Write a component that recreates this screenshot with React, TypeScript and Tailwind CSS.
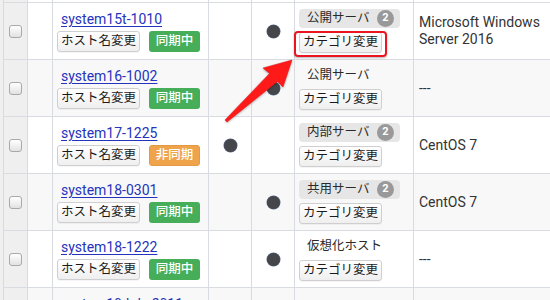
import React from "react";

type Row = {
  host: string;
  sync: "on" | "off";
  dotCol: 3 | 4;
  category?: string;
  count?: number;
  os: string[];
};

const rows: Row[] = [
  { host: "system15t-1010", sync: "on", dotCol: 4, category: "公開サーバ", count: 2, os: ["Microsoft Windows", "Server 2016"] },
  { host: "system16-1002", sync: "on", dotCol: 4, category: "公開サーバ", os: ["---"] },
  { host: "system17-1225", sync: "off", dotCol: 3, category: "内部サーバ", count: 2, os: ["CentOS 7"] },
  { host: "system18-0301", sync: "on", dotCol: 4, category: "共用サーバ", count: 2, os: ["CentOS 7"] },
  { host: "system18-1222", sync: "on", dotCol: 4, category: "仮想化ホスト", os: ["---"] },
  { host: "system19-kdx-2011", sync: "on", dotCol: 4, os: [] },
];

const jp = { fontFamily: "Roboto, 'Noto Sans CJK JP', sans-serif" };

const cols = "grid grid-cols-[24px_25px_156px_43px_43px_119px_1fr]";
const cell = "border-r border-[#d8dce1] flex items-center";

const Btn = ({ label }: { label: string }) => (
  <div className="h-[21px] w-[83px] flex items-center justify-center rounded-[3px] border border-[#cfcfcf] bg-gradient-to-b from-white to-[#efefef] text-[12.5px] text-[#1a1a1a] shadow-[0_1px_0_rgba(0,0,0,0.04)]">
    {label}
  </div>
);

const Dot = () => <div className="w-[13px] h-[13px] rounded-full bg-[#444649] shadow-[0_0_0_0.5px_#5a6a8a]" />;

const App = () => {
  return (
    <div className="relative w-[550px] h-[300px] overflow-hidden bg-[#efefef]" style={jp}>
      <div className="ml-[3px] border-l border-[#d8dce1]">
        <div className={`${cols} h-[3px] border-b border-[#d8dce1]`}>
          <div className="bg-[#efefef] border-r border-[#d8dce1]" />
          <div className="bg-white border-r border-[#d8dce1]" />
          <div className="bg-white border-r border-[#d8dce1]" />
          <div className="bg-white border-r border-[#d8dce1]" />
          <div className="bg-white border-r border-[#d8dce1]" />
          <div className="bg-white border-r border-[#d8dce1]" />
          <div className="bg-white" />
        </div>
        {rows.map((r, i) => {
          const bg = i % 2 === 0 ? "bg-white" : "bg-[#f8f8f8]";
          return (
            <div key={r.host} className={`${cols} h-[57px] border-b border-[#d8dce1] ${bg}`}>
              <div className={`${cell} justify-center bg-[#efefef]`}>
                <div className="w-[13px] h-[13px] rounded-[3px] border border-[#a9a9a9] bg-gradient-to-b from-white to-[#e2e2e2]" />
              </div>
              <div className={cell} />
              <div className={`${cell} flex-col items-start justify-center pl-[4px] gap-[3px]`}>
                <a href="#" className="ml-[4px] text-[14px] leading-[18px] text-[#2533bd] underline underline-offset-2">
                  {r.host}
                </a>
                <div className="flex items-center gap-[9px]">
                  <Btn label="ホスト名変更" />
                  <div
                    className={`h-[21px] w-[51px] flex items-center justify-center rounded-[3px] text-[12.5px] font-medium text-white ${
                      r.sync === "on" ? "bg-[#46ad58]" : "bg-[#efa44c] border border-[#e29a44]"
                    }`}
                  >
                    {r.sync === "on" ? "同期中" : "非同期"}
                  </div>
                </div>
              </div>
              <div className={`${cell} justify-center`}>{r.dotCol === 3 && <Dot />}</div>
              <div className={`${cell} justify-center`}>{r.dotCol === 4 && <Dot />}</div>
              <div className={`${cell} flex-col items-start justify-center pl-[4px] gap-[4px]`}>
                {r.category && (
                  <>
                    <div
                      className={`h-[19px] flex items-center pl-[8px] rounded-[4px] text-[12.5px] text-[#2a2a2a] ${
                        r.count ? "w-[101px] bg-[#e6e6e6]" : ""
                      }`}
                    >
                      <span className="flex-1">{r.category}</span>
                      {r.count && (
                        <span className="w-[17px] h-[17px] mr-[6px] rounded-full bg-[#999] text-white text-[11px] font-bold flex items-center justify-center">
                          {r.count}
                        </span>
                      )}
                    </div>
                    <Btn label="カテゴリ変更" />
                  </>
                )}
              </div>
              <div className="flex flex-col justify-center pl-[5px] text-[14px] leading-[17px] text-[#333]">
                {r.os.map((l) => (
                  <span key={l}>{l}</span>
                ))}
              </div>
            </div>
          );
        })}
      </div>

      <div className="absolute left-[294px] top-[31px] w-[93px] h-[26px] rounded-[4px] border-2 border-[#ea1520] shadow-[0_1px_2px_rgba(0,0,0,0.3)]" />
      <svg className="absolute left-0 top-0" width="550" height="300" viewBox="0 0 550 300">
        <polygon
          points="225,120 227,122 277.5,81.5 283,87 292,60 263,68 269.5,73.5"
          fill="#ff1a1a"
          stroke="#e01010"
          strokeWidth="0.5"
          strokeLinejoin="round"
          style={{ filter: "drop-shadow(0 1px 1px rgba(0,0,0,0.3))" }}
        />
      </svg>
    </div>
  );
};

export default App;
